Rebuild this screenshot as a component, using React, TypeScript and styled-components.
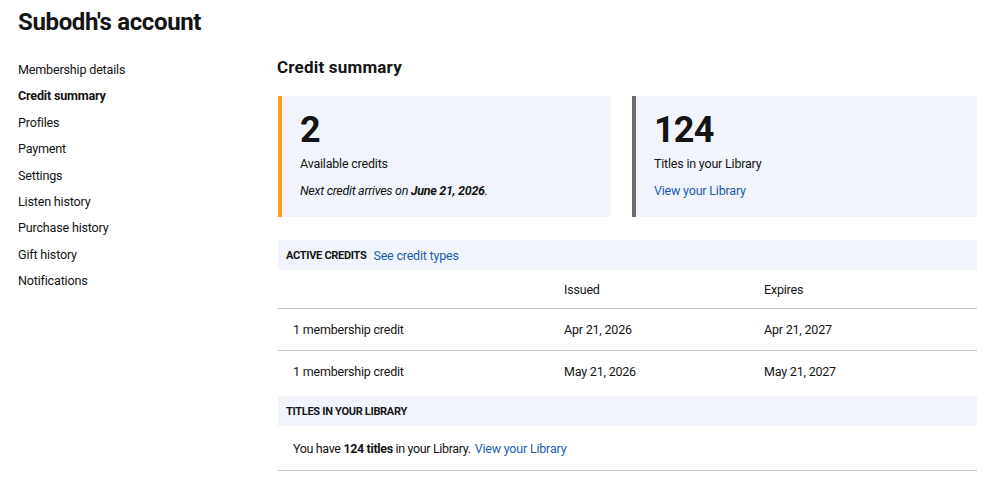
import React from "react";
import styled, { createGlobalStyle } from "styled-components";

const Global = createGlobalStyle`
  html, body { margin: 0; padding: 0; background: #fff; }
  body { font-family: Roboto, "Noto Sans", "Liberation Sans", sans-serif; color: #141414; -webkit-font-smoothing: antialiased; }
  * { box-sizing: border-box; }
`;

const Page = styled.div`
  width: 1000px;
  height: 488px;
  padding: 8px 23px 0 18px;
  overflow: hidden;
`;

const Title = styled.h1`
  margin: 0;
  font-size: 24px;
  font-weight: 700;
  line-height: 28px;
  letter-spacing: -0.35px;
`;

const Body = styled.div`
  display: grid;
  grid-template-columns: 259px 1fr;
  margin-top: 20px;
`;

const Nav = styled.nav`
  display: flex;
  flex-direction: column;
  padding-top: 1px;
`;

const NavItem = styled.a<{ $active?: boolean }>`
  font-size: 12.6px;
  line-height: 26.4px;
  letter-spacing: -0.2px;
  font-weight: ${(p) => (p.$active ? 700 : 400)};
  color: #141414;
  text-decoration: none;
`;

const Main = styled.main`
  display: flex;
  flex-direction: column;
`;

const Heading = styled.h2`
  margin: 0;
  font-size: 17px;
  font-weight: 700;
  line-height: 22px;
  letter-spacing: 0.2px;
`;

const Cards = styled.div`
  display: grid;
  grid-template-columns: 333px 345px;
  column-gap: 21px;
  margin-top: 18px;
  margin-left: 1px;
`;

const Card = styled.div<{ $accent: string }>`
  background: #f1f5fb;
  border-left: 4px solid ${(p) => p.$accent};
  height: 121px;
  padding: 13px 18px 0 18px;
  display: flex;
  flex-direction: column;
`;

const BigNum = styled.div`
  font-size: 36px;
  font-weight: 700;
  line-height: 42px;
  letter-spacing: -0.8px;
`;

const CardText = styled.div`
  font-size: 12.5px;
  line-height: 17px;
  letter-spacing: -0.2px;
  margin-top: 4px;
`;

const CardNote = styled.div`
  font-size: 12.5px;
  line-height: 17px;
  letter-spacing: -0.3px;
  margin-top: 10px;
  font-style: italic;
  b { font-weight: 700; }
`;

const Link = styled.a`
  color: #1c5cb0;
  text-decoration: none;
  font-size: 12.5px;
  letter-spacing: -0.2px;
`;

const CardLink = styled(Link)`
  line-height: 17px;
  margin-top: 10px;
`;

const SectionBar = styled.div<{ $top: number }>`
  margin-top: ${(p) => p.$top}px;
  margin-left: 1px;
  height: 30px;
  background: #f1f5fb;
  display: flex;
  align-items: center;
  gap: 7px;
  padding-left: 8px;
`;

const BarLabel = styled.span`
  font-size: 11px;
  font-weight: 700;
  text-transform: uppercase;
  letter-spacing: -0.3px;
`;

const Row = styled.div<{ $h: number; $line?: boolean }>`
  margin-left: 1px;
  height: ${(p) => p.$h}px;
  display: grid;
  grid-template-columns: 271px 200px 1fr;
  align-items: center;
  padding-left: 15px;
  border-bottom: ${(p) => (p.$line ? "1.5px solid #c4c4c4" : "none")};
  font-size: 12.5px;
  letter-spacing: -0.2px;
`;

const Cell = styled.span``;

const TextRow = styled.div`
  margin-left: 1px;
  height: 45px;
  display: flex;
  align-items: center;
  padding-left: 15px;
  border-bottom: 1.5px solid #c4c4c4;
  font-size: 12.5px;
  letter-spacing: -0.35px;
  b { font-weight: 700; }
  gap: 4px;
`;

const navItems = [
  "Membership details",
  "Credit summary",
  "Profiles",
  "Payment",
  "Settings",
  "Listen history",
  "Purchase history",
  "Gift history",
  "Notifications",
];

const credits = [
  { name: "1 membership credit", issued: "Apr 21, 2026", expires: "Apr 21, 2027" },
  { name: "1 membership credit", issued: "May 21, 2026", expires: "May 21, 2027" },
];

export default function App() {
  return (
    <>
      <Global />
      <Page>
        <Title>Subodh's account</Title>
        <Body>
          <Nav>
            {navItems.map((n) => (
              <NavItem key={n} $active={n === "Credit summary"}>
                {n}
              </NavItem>
            ))}
          </Nav>
          <Main>
            <Heading>Credit summary</Heading>
            <Cards>
              <Card $accent="#f7a11a">
                <BigNum>2</BigNum>
                <CardText>Available credits</CardText>
                <CardNote>
                  Next credit arrives on <b>June 21, 2026</b>.
                </CardNote>
              </Card>
              <Card $accent="#6b6b6b">
                <BigNum>124</BigNum>
                <CardText>Titles in your Library</CardText>
                <CardLink>View your Library</CardLink>
              </Card>
            </Cards>
            <SectionBar $top={23}>
              <BarLabel>Active credits</BarLabel>
              <Link>See credit types</Link>
            </SectionBar>
            <Row $h={39} $line>
              <Cell></Cell>
              <Cell>Issued</Cell>
              <Cell>Expires</Cell>
            </Row>
            {credits.map((c, i) => (
              <Row key={i} $h={i === 0 ? 42 : 41} $line={i === 0}>
                <Cell>{c.name}</Cell>
                <Cell>{c.issued}</Cell>
                <Cell>{c.expires}</Cell>
              </Row>
            ))}
            <SectionBar $top={4}>
              <BarLabel>Titles in your Library</BarLabel>
            </SectionBar>
            <TextRow>
              <span>
                You have <b>124 titles</b> in your Library.
              </span>
              <Link>View your Library</Link>
            </TextRow>
          </Main>
        </Body>
      </Page>
    </>
  );
}
